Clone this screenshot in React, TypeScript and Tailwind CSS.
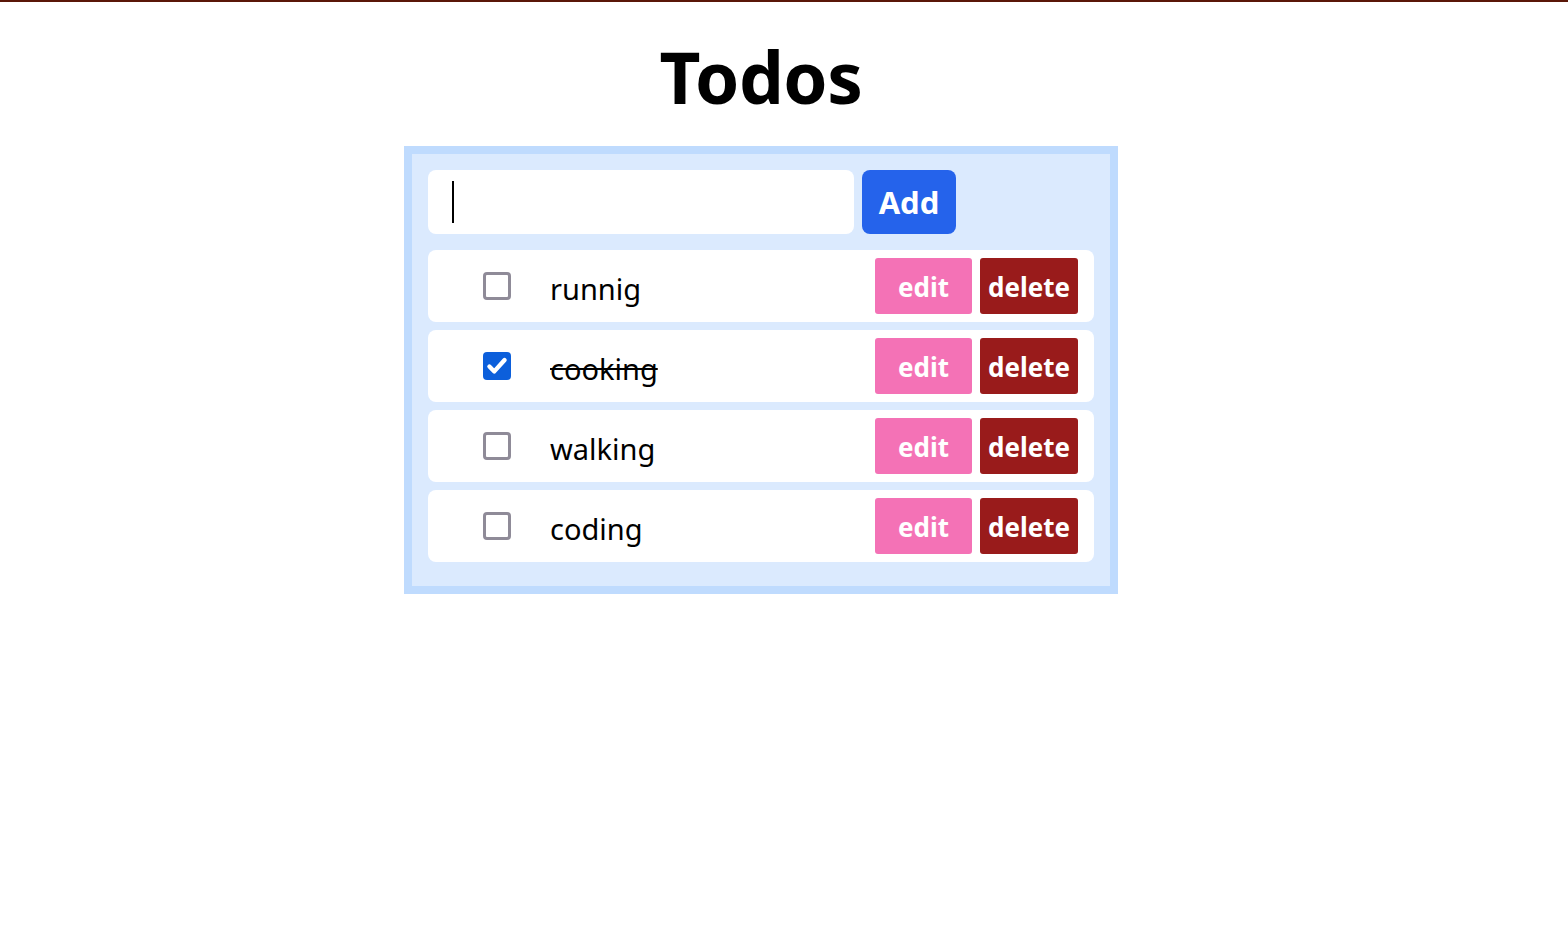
import { useState } from 'react'

type Todo = { id: number; title: string; done: boolean }

const initialTodos: Todo[] = [
    { id: 1, title: 'runnig', done: false },
    { id: 2, title: 'cooking', done: true },
    { id: 3, title: 'walking', done: false },
    { id: 4, title: 'coding', done: false },
]

function Checkbox({ checked, onChange }: { checked: boolean; onChange: () => void }) {
    return (
        <button
            type="button"
            onClick={onChange}
            className={
                checked
                    ? 'flex h-7 w-7 items-center justify-center rounded-[4px] bg-[#0c5fdb]'
                    : 'flex h-7 w-7 items-center justify-center rounded-[4px] border-[3px] border-[#8f8b98] bg-white'
            }
        >
            {checked && (
                <svg viewBox="0 0 24 24" className="h-[26px] w-[26px]" fill="none" stroke="white" strokeWidth={4} strokeLinecap="round" strokeLinejoin="round">
                    <path d="M5 12.5l4.5 4.5L19 6.5" />
                </svg>
            )}
        </button>
    )
}

export default function App() {
    const [todos, setTodos] = useState<Todo[]>(initialTodos)
    const [text, setText] = useState('')

    const toggle = (id: number) =>
        setTodos(todos.map((t) => (t.id === id ? { ...t, done: !t.done } : t)))

    return (
        <div className="min-h-screen border-t-2 border-[#5a1708] bg-white pr-[46px] font-['Noto_Sans','Open_Sans',sans-serif] text-black">
            <div className="flex flex-col items-center">
                <h1 className="mt-[30px] text-[71px] leading-[90px] font-bold tracking-[-0.5px]">Todos</h1>

                <div className="mt-[24px] w-[714px] border-8 border-[#bfdbfe] bg-[#dbeafe] px-4 pt-4 pb-6">
                    <div className="flex gap-2">
                        <div className="relative">
                            <input
                                value={text}
                                onChange={(e) => setText(e.target.value)}
                                className="h-16 w-[426px] rounded-lg bg-white px-6 text-[30px] outline-none caret-black"
                            />
                            {text === '' && <span className="absolute top-[11px] left-[24px] h-[42px] w-[2px] bg-black" />}
                        </div>
                        <button className="h-16 w-[94px] rounded-lg bg-[#2563eb] text-[31px] font-bold text-white">Add</button>
                    </div>

                    <div className="mt-4 flex flex-col gap-2">
                        {todos.map((todo) => (
                            <div key={todo.id} className="flex h-[72px] items-center rounded-lg bg-white pr-4 pl-[55px]">
                                <Checkbox checked={todo.done} onChange={() => toggle(todo.id)} />
                                <span className={`ml-[39px] flex-1 pt-[6px] text-[29px] ${todo.done ? 'line-through' : ''}`}>
                                    {todo.title}
                                </span>
                                <button className="h-14 w-[97px] rounded-[3px] bg-[#f472b6] pt-[2px] text-[26px] font-bold text-white">edit</button>
                                <button className="ml-2 h-14 w-[98px] rounded-[3px] bg-[#991b1b] pt-[2px] text-[26px] font-bold text-white">delete</button>
                            </div>
                        ))}
                    </div>
                </div>
            </div>
        </div>
    )
}
